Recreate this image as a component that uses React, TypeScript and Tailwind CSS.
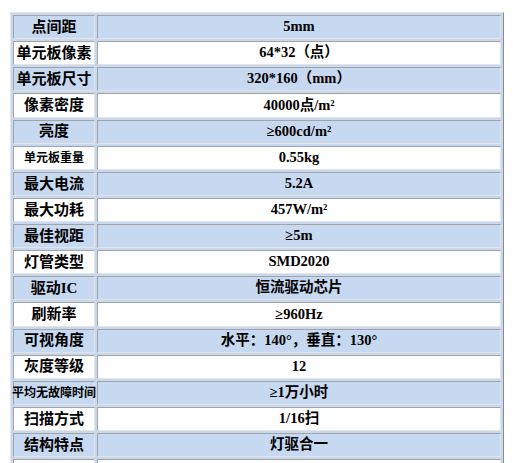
import React from 'react';

type Row = { label: string; value: string; small?: boolean };

const rows: Row[] = [
  { label: '点间距', value: '5mm' },
  { label: '单元板像素', value: '64*32（点）' },
  { label: '单元板尺寸', value: '320*160（mm）' },
  { label: '像素密度', value: '40000点/m²' },
  { label: '亮度', value: '≥600cd/m²' },
  { label: '单元板重量', value: '0.55kg', small: true },
  { label: '最大电流', value: '5.2A' },
  { label: '最大功耗', value: '457W/m²' },
  { label: '最佳视距', value: '≥5m' },
  { label: '灯管类型', value: 'SMD2020' },
  { label: '驱动IC', value: '恒流驱动芯片' },
  { label: '刷新率', value: '≥960Hz' },
  { label: '可视角度', value: '水平：140°，垂直：130°' },
  { label: '灰度等级', value: '12' },
  { label: '平均无故障时间', value: '≥1万小时', small: true },
  { label: '扫描方式', value: '1/16扫' },
  { label: '结构特点', value: '灯驱合一' },
  { label: '', value: '' },
];

const cell =
  'h-[24.125px] flex items-center justify-center whitespace-nowrap border border-t-[#a3a3a3] border-l-[#a3a3a3] border-b-[#e4e4e4] border-r-[#e4e4e4]';

export default function App() {
  return (
    <div
      className="min-h-screen bg-white pt-[12px] pl-[10px] text-black"
      style={{ fontFamily: '"Liberation Serif", "Noto Sans CJK SC", serif' }}
    >
      <div className="w-[494px] border border-t-[#dfe6ef] border-l-[#dfe6ef] border-b-[#8c8c8c] border-r-[#8c8c8c] bg-[#c6d9f1] p-[2px]">
        <div className="grid grid-cols-[82px_404px] gap-[2px]">
          {rows.map((r, i) => {
            const bg = i % 2 === 0 ? 'bg-[#c6d9f1]' : 'bg-white';
            return (
              <React.Fragment key={i}>
                <div
                  className={`${cell} ${bg} font-bold ${
                    r.small ? 'text-[12px]' : 'text-[15px]'
                  }`}
                >
                  {r.label}
                </div>
                <div className={`${cell} ${bg} font-bold text-[14.5px]`}>{r.value}</div>
              </React.Fragment>
            );
          })}
        </div>
      </div>
    </div>
  );
}
